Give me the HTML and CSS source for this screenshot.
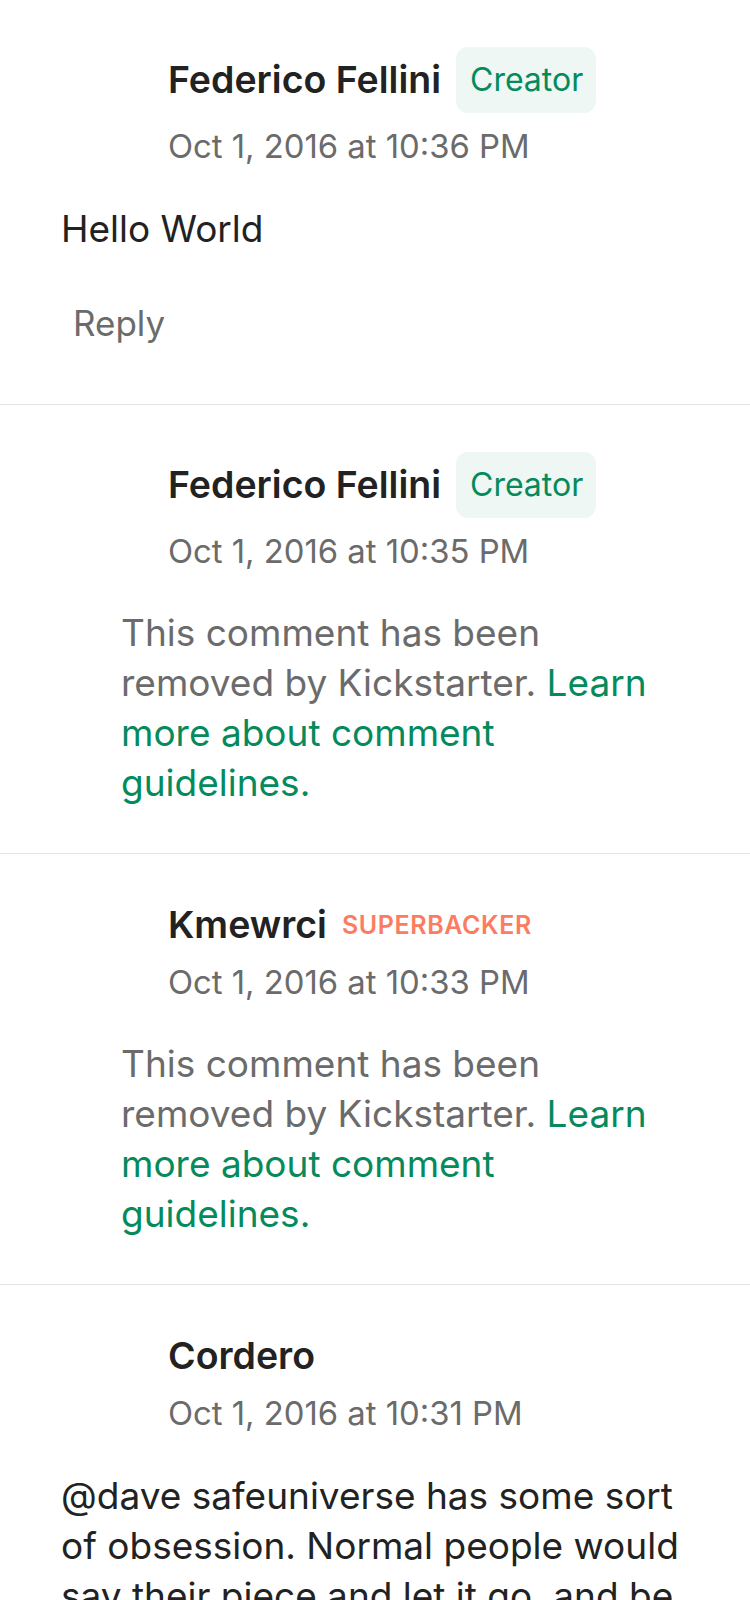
FILE: index.html
```html
<!DOCTYPE html>
<html lang="en">
<head>
<meta charset="utf-8">
<title>Comments</title>
<link rel="stylesheet" href="styles.css">
</head>
<body>
<div class="comments">
  <div class="comment">
    <div class="header">
      <div class="name-row">
        <span class="name">Federico Fellini</span>
        <span class="badge-creator">Creator</span>
      </div>
      <div class="date">Oct 1, 2016 at 10:36 PM</div>
    </div>
    <p class="body">Hello World</p>
    <div class="reply">Reply</div>
  </div>

  <div class="comment">
    <div class="header">
      <div class="name-row">
        <span class="name">Federico Fellini</span>
        <span class="badge-creator">Creator</span>
      </div>
      <div class="date">Oct 1, 2016 at 10:35 PM</div>
    </div>
    <p class="removed">This comment has been removed by Kickstarter. <a class="link" href="#">Learn more about comment guidelines.</a></p>
  </div>

  <div class="comment">
    <div class="header">
      <div class="name-row">
        <span class="name">Kmewrci</span>
        <span class="badge-super">SUPERBACKER</span>
      </div>
      <div class="date">Oct 1, 2016 at 10:33 PM</div>
    </div>
    <p class="removed">This comment has been removed by Kickstarter. <a class="link" href="#">Learn more about comment guidelines.</a></p>
  </div>

  <div class="comment">
    <div class="header">
      <div class="name-row">
        <span class="name">Cordero</span>
      </div>
      <div class="date">Oct 1, 2016 at 10:31 PM</div>
    </div>
    <p class="body">@dave safeuniverse has some sort of obsession. Normal people would say their piece and let it go, and be done with it. Instead he keeps coming back here.</p>
  </div>
</div>
</body>
</html>
```

FILE: styles.css
```css
html, body {
  margin: 0;
  padding: 0;
  background: #ffffff;
}

body {
  font-family: Inter, "Noto Sans", "Liberation Sans", sans-serif;
  color: #222222;
}

.comments {
  display: flex;
  flex-direction: column;
}

.comment {
  padding: 47px 0 45px;
  border-bottom: 1px solid #e4e4e4;
}

.header {
  padding-left: 168px;
}

.name-row {
  display: flex;
  align-items: center;
  gap: 15px;
  min-height: 48px;
}

.name {
  font-size: 37.5px;
  font-weight: 600;
  line-height: 48px;
  color: #222222;
}

.badge-creator {
  display: flex;
  align-items: center;
  height: 66px;
  padding: 0 13px 0 14px;
  border-radius: 12px;
  background: #eef7f3;
  color: #058a5c;
  font-size: 32px;
  line-height: 1;
}

.badge-super {
  color: #fb7c60;
  font-size: 25px;
  font-weight: 600;
  letter-spacing: 0.6px;
  line-height: 1;
}

.date {
  margin-top: 13px;
  font-size: 32.8px;
  line-height: 40px;
  color: #6b6b6b;
}

.body {
  margin: 38px 0 0;
  padding: 0 61px;
  font-size: 37px;
  line-height: 50px;
  color: #222222;
}

.removed {
  margin: 37px 0 0;
  padding: 0 90px 0 121px;
  font-size: 37px;
  line-height: 50px;
  color: #6b6b6b;
}

.link {
  color: #058a5c;
  text-decoration: none;
}

.reply {
  margin: 44px 0 11px;
  padding-left: 73px;
  font-size: 35px;
  line-height: 50px;
  color: #6b6b6b;
}
```
